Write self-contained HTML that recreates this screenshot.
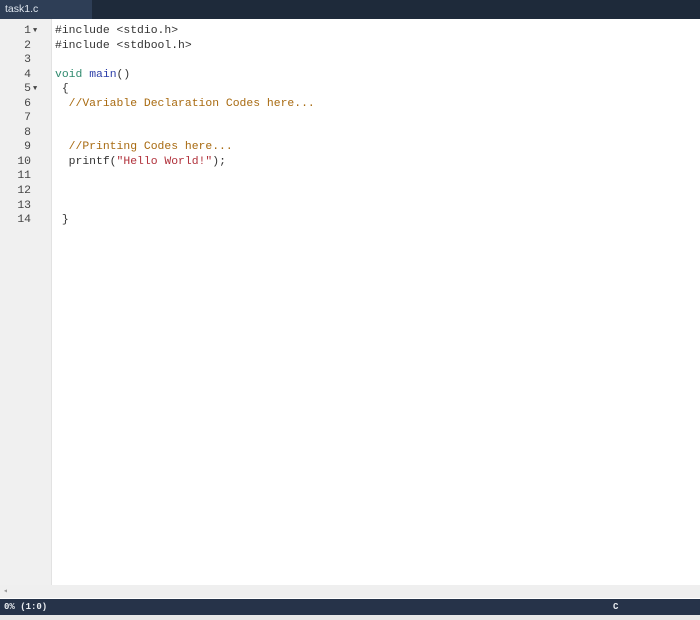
<!DOCTYPE html><html><head><style>
body{margin:0;width:700px;height:620px;overflow:hidden;background:#fff;font-family:"Liberation Mono",monospace;position:relative}
.top{position:absolute;left:0;top:0;width:700px;height:19px;background:#1e2a3a}
.tab{position:absolute;left:0;top:0;width:92px;height:19px;background:#2e3e56;color:#dfe6ee;font:10.5px "Liberation Sans",sans-serif;line-height:18px;padding-left:5px;box-sizing:border-box}
.gut{position:absolute;left:0;top:19px;width:51px;height:566px;background:#f0f0f0;border-right:1px solid #e2e2e2}
.ln{position:absolute;left:0;width:31px;text-align:right;font-size:11.4px;color:#444;line-height:14.54px}
.ar{position:absolute;left:33px;font-size:7px;color:#444}
.code{position:absolute;left:55px;top:24px;font-size:11.4px;line-height:14.54px;white-space:pre;color:#333}
.k{color:#2f8a6e}.f{color:#2b3da8}.c{color:#a86a10}.s{color:#b0303a}
.hs{position:absolute;left:0;top:585px;width:700px;height:13px;background:#efefef}
.st{position:absolute;left:0;top:599px;width:700px;height:16px;background:#263349;color:#e8ecf0;font-size:9px;font-weight:bold;line-height:16px}
.bt{position:absolute;left:0;top:615px;width:700px;height:5px;background:#e8e8e8}
</style></head><body>
<div class="top"></div><div class="tab">task1.c</div>
<div class="gut"><div style="position:absolute;top:5px;left:0;width:51px">
<div class="ln" style="top:0">1</div><div class="ln" style="top:14.54px">2</div><div class="ln" style="top:29.08px">3</div><div class="ln" style="top:43.6px">4</div><div class="ln" style="top:58.2px">5</div><div class="ln" style="top:72.7px">6</div><div class="ln" style="top:87.2px">7</div><div class="ln" style="top:101.8px">8</div><div class="ln" style="top:116.3px">9</div><div class="ln" style="top:130.9px">10</div><div class="ln" style="top:145.4px">11</div><div class="ln" style="top:160px">12</div><div class="ln" style="top:174.5px">13</div><div class="ln" style="top:189px">14</div>
<div class="ar" style="top:3px">▼</div><div class="ar" style="top:61px">▼</div></div></div>
<div class="code">#include &lt;stdio.h&gt;
#include &lt;stdbool.h&gt;

<span class="k">void</span> <span class="f">main</span>()
 {
  <span class="c">//Variable Declaration Codes here...</span>


  <span class="c">//Printing Codes here...</span>
  printf(<span class="s">"Hello World!"</span>);



 }</div>
<div class="hs"><span style="position:absolute;left:3px;top:1px;font-size:8px;color:#999">◂</span></div>
<div class="st"><span style="position:absolute;left:4px">0% (1:0)</span><span style="position:absolute;left:613px">C</span></div>
<div class="bt"></div>
</body></html>
